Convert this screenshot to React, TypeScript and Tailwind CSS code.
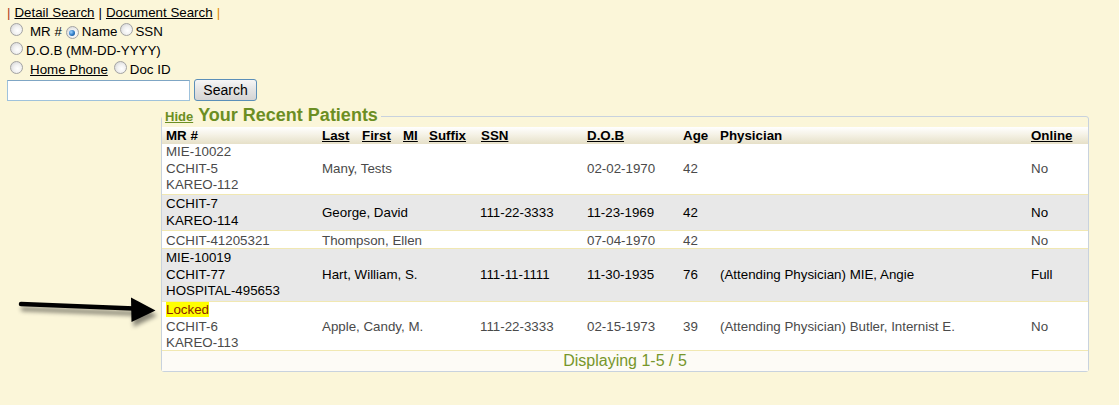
import React from "react";

const Radio = ({ checked = false }: { checked?: boolean }) => (
  <span className="inline-flex h-[13px] w-[13px] shrink-0 items-center justify-center rounded-full border border-[#a3a3a3] bg-[radial-gradient(circle_at_60%_60%,#ffffff_0%,#f2f2f2_40%,#cfcfcf_100%)]">
    {checked && (
      <span className="h-[6px] w-[6px] rounded-full bg-[radial-gradient(circle_at_35%_35%,#9fd3ff_0%,#2a78c4_55%,#14457a_100%)]" />
    )}
  </span>
);

type Row = {
  ids: React.ReactNode[];
  name: string;
  ssn: string;
  dob: string;
  age: string;
  phys: string;
  online: string;
  gray: boolean;
  h: string;
};

const rows: Row[] = [
  { ids: ["MIE-10022", "CCHIT-5", "KAREO-112"], name: "Many, Tests", ssn: "", dob: "02-02-1970", age: "42", phys: "", online: "No", gray: false, h: "h-[50px]" },
  { ids: ["CCHIT-7", "KAREO-114"], name: "George, David", ssn: "111-22-3333", dob: "11-23-1969", age: "42", phys: "", online: "No", gray: true, h: "h-[36px]" },
  { ids: ["CCHIT-41205321"], name: "Thompson, Ellen", ssn: "", dob: "07-04-1970", age: "42", phys: "", online: "No", gray: false, h: "h-[18px]" },
  { ids: ["MIE-10019", "CCHIT-77", "HOSPITAL-495653"], name: "Hart, William, S.", ssn: "111-11-1111", dob: "11-30-1935", age: "76", phys: "(Attending Physician) MIE, Angie", online: "Full", gray: true, h: "h-[53px]" },
  {
    ids: [
      <span key="l" className="bg-[#ffff00] text-[#8a1f00]">Locked</span>,
      "CCHIT-6",
      "KAREO-113",
    ],
    name: "Apple, Candy, M.",
    ssn: "111-22-3333",
    dob: "02-15-1973",
    age: "39",
    phys: "(Attending Physician) Butler, Internist E.",
    online: "No",
    gray: false,
    h: "h-[49px]",
  },
];

export default function App() {
  return (
    <div
      className="relative min-h-[405px] w-[1119px] bg-[#fbf6d9] text-[13.33px] text-black"
      style={{ fontFamily: '"Liberation Sans", Arial, sans-serif' }}
    >
      {/* Search form */}
      <div className="pl-[7px] pt-[3px]">
        <div className="flex h-[19px] items-center">
          <span className="text-[#b03a1a]">|</span>
          <span className="ml-[4px] underline">Detail Search</span>
          <span className="ml-[4px]">|</span>
          <span className="ml-[4px] underline">Document Search</span>
          <span className="ml-[4px] text-[#e08a00]">|</span>
        </div>
        <div className="flex h-[19px] items-center">
          <span className="ml-[3px]"><Radio /></span>
          <span className="ml-[7px]">MR #</span>
          <span className="ml-[4px]"><Radio checked /></span>
          <span className="ml-[3px]">Name</span>
          <span className="ml-[3px]"><Radio /></span>
          <span className="ml-[2px]">SSN</span>
        </div>
        <div className="flex h-[19px] items-center">
          <span className="ml-[3px]"><Radio /></span>
          <span className="ml-[3px]">D.O.B (MM-DD-YYYY)</span>
        </div>
        <div className="flex h-[19px] items-center">
          <span className="ml-[3px]"><Radio /></span>
          <span className="ml-[7px] underline">Home Phone</span>
          <span className="ml-[6px]"><Radio /></span>
          <span className="ml-[3px]">Doc ID</span>
        </div>
        <div className="flex h-[22px] items-center">
          <div className="h-[21px] w-[183px] border border-[#9fc2dc] border-t-[#7fa6c4] bg-white" />
          <button className="ml-[4px] h-[22px] w-[63px] rounded-[3px] border border-[#5b8fb8] bg-[linear-gradient(#f6f6f6,#e3e3e3_50%,#d4d4d4)] text-[14px] leading-none text-black">
            Search
          </button>
        </div>
      </div>

      {/* Recent patients fieldset */}
      <fieldset className="ml-[161px] mt-[4px] w-[928px] rounded-[3px] border border-[#c8d2de]">
        <legend className="px-[3px] leading-[20px]">
          <span className="text-[13px] font-bold text-[#6b8e23] underline">Hide</span>
          <span className="ml-[5px] text-[18px] font-bold text-[#6b8e23]">Your Recent Patients</span>
        </legend>
        <div className="grid grid-cols-[160px_158px_107px_96px_37px_311px_57px]">
          {/* header */}
          <div className="col-span-7 grid h-[17px] grid-cols-subgrid items-center bg-[linear-gradient(#ffffff,#f5f2e6_45%,#e6e0c8)] font-bold leading-[17px]">
            <div className="pl-[4px]">MR #</div>
            <div className="flex">
              <span className="w-[40px]"><span className="underline">Last</span></span>
              <span className="w-[41px]"><span className="underline">First</span></span>
              <span className="w-[26px]"><span className="underline">MI</span></span>
              <span className="underline">Suffix</span>
            </div>
            <div className="pl-[1px]"><span className="underline">SSN</span></div>
            <div><span className="underline">D.O.B</span></div>
            <div>Age</div>
            <div>Physician</div>
            <div><span className="underline">Online</span></div>
          </div>
          {rows.map((r, i) => (
            <div
              key={i}
              className={`col-span-7 grid grid-cols-subgrid items-center ${r.h} ${
                i > 0 ? "border-t border-[#f1e8b2]" : ""
              } ${r.gray ? "bg-[#e8e8e8] text-black" : "bg-white text-[#4a4a4a]"}`}
            >
              <div className="flex flex-col pl-[4px] leading-[16.5px]">
                {r.ids.map((id, j) => (
                  <div key={j}>{id}</div>
                ))}
              </div>
              <div>{r.name}</div>
              <div>{r.ssn}</div>
              <div>{r.dob}</div>
              <div>{r.age}</div>
              <div>{r.phys}</div>
              <div>{r.online}</div>
            </div>
          ))}
          <div className="col-span-7 flex h-[21px] items-center justify-center border-t border-[#f1e8b2] bg-[#fdfbf6] text-[16px] text-[#77962b]">
            Displaying 1-5 / 5
          </div>
        </div>
      </fieldset>

      {/* annotation arrow */}
      <svg
        className="absolute left-0 top-[285px]"
        width="170"
        height="50"
        viewBox="0 285 170 50"
      >
        <defs>
          <filter id="sh" x="-20%" y="-50%" width="140%" height="200%">
            <feDropShadow dx="2" dy="5" stdDeviation="2" floodColor="#000" floodOpacity="0.45" />
          </filter>
        </defs>
        <g filter="url(#sh)">
          <line x1="21" y1="304" x2="134" y2="308.5" stroke="#000" strokeWidth="4.5" strokeLinecap="round" />
          <polygon points="131,297.5 155.5,310.5 131.5,322" fill="#000" />
        </g>
      </svg>
    </div>
  );
}
